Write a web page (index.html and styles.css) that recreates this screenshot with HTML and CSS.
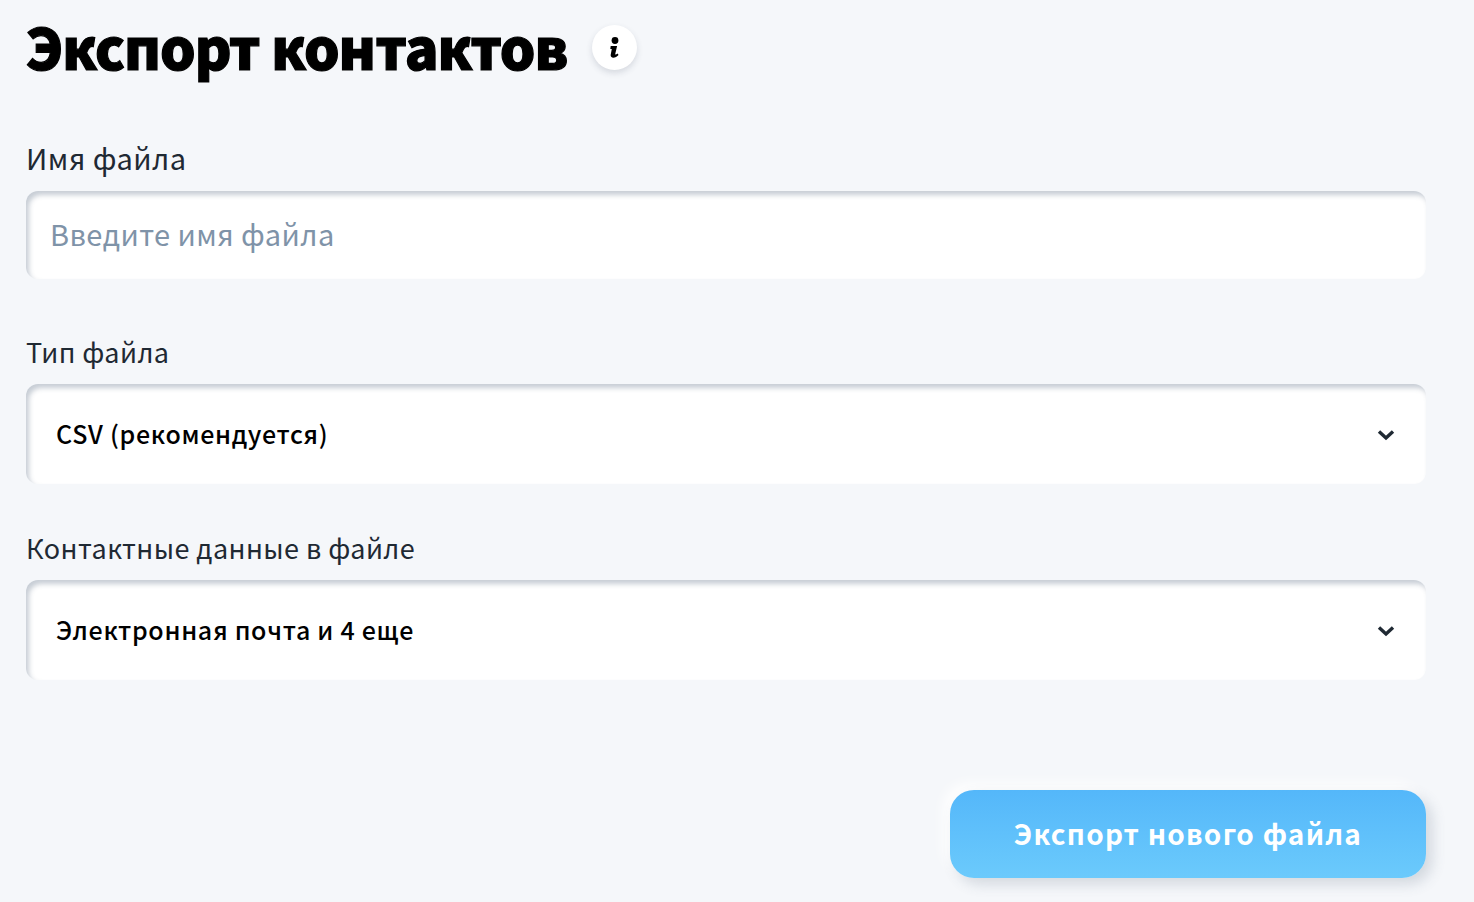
FILE: index.html
```html
<!DOCTYPE html>
<html lang="ru">
<head>
  <meta charset="UTF-8" />
  <meta name="viewport" content="width=device-width, initial-scale=1.0"/>
  <title>Экспорт контактов</title>
  <link rel="stylesheet" href="styles.css">
</head>
<body>
  <div class="page">
    <div class="title-row">
      <h1>Экспорт контактов</h1>
      <span class="info">
        <svg width="12" height="24" viewBox="0 0 12 24">
          <circle cx="6" cy="5.5" r="3.4" fill="#000"/>
          <path d="M1.7 11.1 H8.1 L6.3 18.7 C6.1 19.9 6.9 19.9 8.7 18.5 L9.5 20.1 C7.1 23.1 1.1 24.1 1.7 19.7 L2.8 14.1 H1.3 Z" fill="#000"/>
        </svg>
      </span>
    </div>

    <label class="label label-first">Имя файла</label>
    <input class="field" type="text" placeholder="Введите имя файла" />

    <label class="label label-second">Тип файла</label>
    <div class="select">
      <span>CSV (рекомендуется)</span>
      <svg class="chevron" width="18" height="12" viewBox="0 0 18 12"><path d="M2 2.5 L9 9 L16 2.5" fill="none" stroke="#1f2933" stroke-width="3.4"/></svg>
    </div>

    <label class="label">Контактные данные в файле</label>
    <div class="select">
      <span>Электронная почта и 4 еще</span>
      <svg class="chevron" width="18" height="12" viewBox="0 0 18 12"><path d="M2 2.5 L9 9 L16 2.5" fill="none" stroke="#1f2933" stroke-width="3.4"/></svg>
    </div>

    <div class="actions">
      <button class="export-btn">Экспорт нового файла</button>
    </div>
  </div>
</body>
</html>
```

FILE: styles.css
```css
html, body {
  margin: 0;
  height: 100%;
}
body {
  font-family: "Noto Sans CJK SC", "Noto Sans", sans-serif;
  background: #f5f7fa;
  color: #1f2933;
  overflow: hidden;
}
.page {
  width: 1400px;
  padding: 0 48px 0 26px;
}
.title-row {
  display: flex;
  align-items: center;
  gap: 25px;
  height: 100px;
}
h1 {
  margin: -8px 0 0;
  font-size: 56px;
  font-weight: 900;
  line-height: 100px;
  color: #000;
  letter-spacing: -1px;
  -webkit-text-stroke: 1.2px #000;
}
.info {
  width: 45px;
  height: 45px;
  margin-top: -6px;
  border-radius: 50%;
  background: #fff;
  box-shadow: 0 3px 6px rgba(50, 65, 85, 0.16);
  display: flex;
  align-items: center;
  justify-content: center;
}
.label {
  display: block;
  height: 52px;
  margin-top: 44px;
  font-size: 27px;
  line-height: 40px;
  letter-spacing: 0.42px;
}
.label-first {
  height: 54px;
  margin-top: 37px;
  font-size: 29px;
  letter-spacing: 0.45px;
}
.label-second {
  margin-top: 53px;
}
.field, .select {
  display: flex;
  width: 100%;
  box-sizing: border-box;
  border: none;
  border-radius: 12px;
  background: #fff;
  box-shadow: inset 3px 4px 5px rgba(70, 90, 115, 0.3);
}
.field {
  height: 88px;
  padding: 0 24px 4px;
  font: inherit;
  font-size: 29px;
  letter-spacing: 0.42px;
  outline: none;
}
.field::placeholder {
  color: #7f93a8;
  opacity: 1;
}
.select {
  height: 100px;
  padding: 0 31px 2px 30px;
  align-items: center;
  justify-content: space-between;
  font-size: 25px;
  font-weight: 500;
  color: #000;
  letter-spacing: 0.7px;
}
.chevron {
  margin-top: 4px;
}
.actions {
  display: flex;
  justify-content: flex-end;
  margin-top: 110px;
}
.export-btn {
  width: 476px;
  height: 88px;
  padding: 0 0 2px;
  border: none;
  border-radius: 24px;
  background: linear-gradient(#54b7fa, #6bcafc);
  box-shadow: 6px 6px 14px rgba(70, 90, 115, 0.2), -6px -6px 14px #fff;
  color: #fff;
  font: inherit;
  font-size: 28px;
  font-weight: 700;
  letter-spacing: 1.25px;
}
```
